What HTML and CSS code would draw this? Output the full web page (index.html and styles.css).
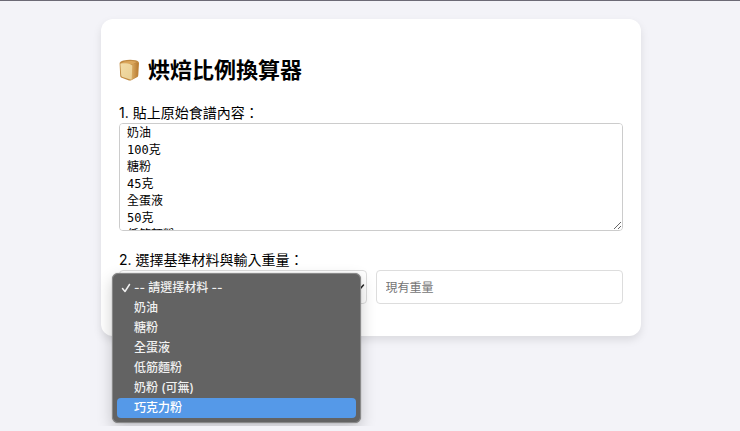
FILE: index.html
```html
<!DOCTYPE html>
<html lang="zh-Hant">
<head>
    <meta charset="UTF-8">
    <meta name="viewport" content="width=device-width, initial-scale=1.0">
    <title>烘焙比例換算器</title>
    <link rel="stylesheet" href="styles.css">
</head>
<body>

    <main class="container">
        <h1>
            <svg class="bread" viewBox="0 0 21 22" aria-hidden="true">
                <defs>
                    <linearGradient id="face" x1="0" y1="0" x2="1" y2="1">
                        <stop offset="0" stop-color="#f3dca6"/>
                        <stop offset="1" stop-color="#e9cf94"/>
                    </linearGradient>
                    <linearGradient id="side" x1="0" y1="0" x2="1" y2="0">
                        <stop offset="0" stop-color="#dcb068"/>
                        <stop offset="1" stop-color="#b87a30"/>
                    </linearGradient>
                </defs>
                <path fill="#c08a42" d="M.6 4.500C.6 3 2 2.200 4.500 1.500 8 .6 13 .4 16.500 1.300c2.500.6 3.600 1.600 3.500 3.200l-.7 11.500c-.1 1.200-.5 1.800-1.400 2.300l-5.600 3c-.8.4-1.500.4-2.300.1l-7.300-2.600c-1-.4-1.400-1-1.500-2z"/>
                <path fill="#dba75c" d="M2.500 4.200C5 1.700 13 1.300 17.500 3l-4.200 2.600z"/>
                <path fill="url(#side)" d="M12.300 6.500c1.500-1.200 4-2.500 7-2.400l-.7 11.900c0 1-.3 1.400-1.100 1.900l-5.300 2.800z"/>
                <path fill="url(#face)" d="M1.300 4.800c2-.9 8.500-.4 10.600.7 1.200.6 1.400 1.300 1.300 2.500l-.5 11.900c0 .8-.6 1-1.400.7l-7.700-2.700c-.9-.3-1.300-.8-1.400-1.700z"/>
            </svg>
            烘焙比例換算器
        </h1>

        <div class="field">
            <label for="recipe">1. 貼上原始食譜內容：</label>
            <textarea id="recipe">奶油
100克
糖粉
45克
全蛋液
50克
低筋麵粉
200克
奶粉 (可無)
10克
巧克力粉
10克</textarea>
        </div>

        <div class="field">
            <label for="baseItem">2. 選擇基準材料與輸入重量：</label>
            <div class="row">
                <div class="picker">
                    <select id="baseItem">
                        <option>-- 請選擇材料 --</option>
                        <option>奶油</option>
                        <option>糖粉</option>
                        <option>全蛋液</option>
                        <option>低筋麵粉</option>
                        <option>奶粉 (可無)</option>
                        <option>巧克力粉</option>
                    </select>
                    <svg class="chevron" viewBox="0 0 10 10" aria-hidden="true"><path d="M1.500 3l3.500 4 3.500-4"/></svg>
                    <ul class="menu" role="listbox" aria-label="材料">
                        <li role="option" aria-selected="true">
                            <svg class="check" viewBox="0 0 10 10" aria-hidden="true"><path d="M1.500 5.500l2.500 3 4.500-7"/></svg>-- 請選擇材料 --
                        </li>
                        <li role="option">奶油</li>
                        <li role="option">糖粉</li>
                        <li role="option">全蛋液</li>
                        <li role="option">低筋麵粉</li>
                        <li role="option">奶粉 (可無)</li>
                        <li role="option" class="active">巧克力粉</li>
                    </ul>
                </div>
                <input type="text" id="weight" inputmode="decimal" placeholder="現有重量" aria-label="現有重量">
            </div>
        </div>
    </main>

    <script>
        // Copy the clicked menu item into the select and close the menu
        const select = document.getElementById('baseItem');
        const menu = document.querySelector('.menu');

        Array.from(menu.children).forEach(function (item, index) {
            item.addEventListener('click', function () {
                select.selectedIndex = index;
                menu.hidden = true;
            });
        });
    </script>

</body>
</html>
```
FILE: styles.css
```css
* {
    box-sizing: border-box;
}

body {
    margin: 0;
    padding: 18px 18px 90px 20px;
    border-top: 1px solid #6c6a76;
    background-color: #f3f3f8;
    color: #000;
    font-family: Inter, "Noto Sans CJK TC", sans-serif;
    font-size: 14px;
}

.container {
    max-width: 540px;
    margin: 0 auto;
    padding: 35px 18px 32px;
    border-radius: 12px;
    background-color: #fff;
    box-shadow: 0 4px 8px rgba(0, 0, 0, 0.1);
}

h1 {
    display: flex;
    align-items: center;
    gap: 8px;
    margin: 0 0 17px;
    font-size: 22px;
    line-height: 32px;
}

.bread {
    width: 21px;
    height: 22px;
}

.field + .field {
    margin-top: 19px;
}

label {
    display: block;
    line-height: 20px;
}

textarea,
select,
input {
    display: block;
    width: 100%;
    border: 1px solid #ddd;
    border-radius: 4px;
    background-color: #fff;
}

textarea {
    height: 108px;
    padding: 1px 7px;
    border-color: #ccc;
    color: #000;
    font-family: "DejaVu Sans Mono", "Noto Sans CJK TC", monospace;
    font-size: 12px;
    line-height: 17px;
    resize: both;
    scrollbar-width: none;
}

.row {
    display: grid;
    grid-template-columns: 1fr 1fr;
    gap: 9px;
}

select,
input {
    height: 34px;
    padding: 0 9px;
    font-family: inherit;
    font-size: 12px;
}

select {
    appearance: none;
}

input::placeholder {
    color: #757575;
}

.picker {
    position: relative;
}

.chevron {
    position: absolute;
    top: 12px;
    right: 2px;
    width: 10px;
    height: 10px;
}

.chevron path,
.check path {
    fill: none;
    stroke: #222;
    stroke-width: 1.5;
    stroke-linecap: round;
    stroke-linejoin: round;
}

/* Open dropdown */
.menu {
    position: absolute;
    top: 3px;
    left: -7px;
    right: 6px;
    margin: 0;
    padding: 4px;
    border: 1px solid #8a8a8a;
    border-radius: 6px;
    background-color: #636363;
    box-shadow: 0 0 1px rgba(0, 0, 0, 0.5), 0 6px 16px rgba(0, 0, 0, 0.2);
    color: #f0f0f0;
    font-size: 12px;
    font-weight: 500;
    line-height: 20px;
    list-style: none;
}

.menu[hidden] {
    display: none;
}

.menu li {
    position: relative;
    padding-left: 17px;
    border-radius: 4px;
    cursor: default;
}

.menu li.active {
    background-color: #5599e8;
    color: #fff;
}

.check {
    position: absolute;
    top: 5px;
    left: 4px;
    width: 10px;
    height: 10px;
}

.check path {
    stroke: #f0f0f0;
}
```
